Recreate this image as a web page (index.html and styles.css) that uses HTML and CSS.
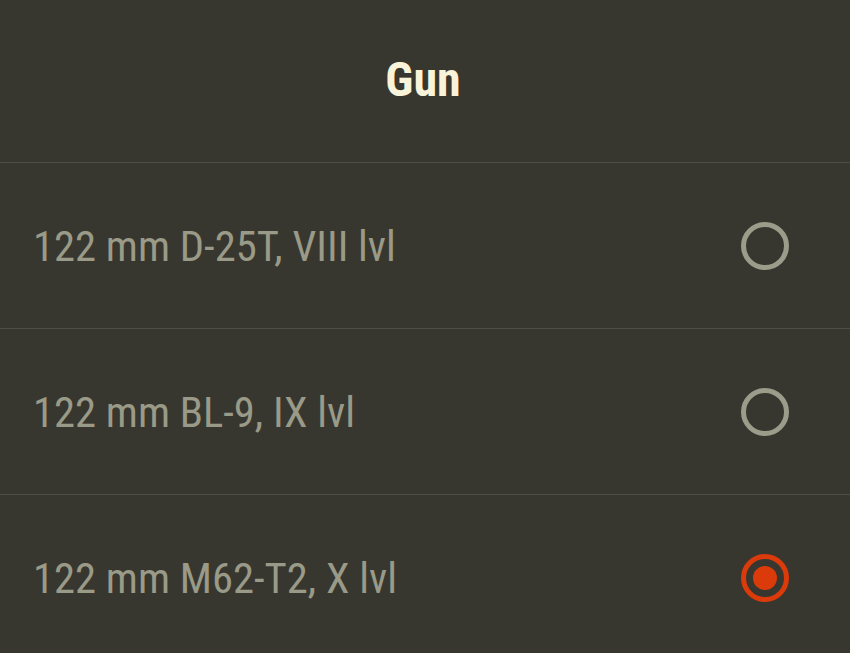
FILE: index.html
```html
<!DOCTYPE html>
<html>
<head>
<meta charset="utf-8">
<link rel="stylesheet" href="styles.css">
</head>
<body>
<div class="sheet">
  <header class="title">Gun</header>
  <ul class="options">
    <li class="option">
      <span class="label">122 mm D-25T, VIII lvl</span>
      <span class="radio"></span>
    </li>
    <li class="option">
      <span class="label">122 mm BL-9, IX lvl</span>
      <span class="radio"></span>
    </li>
    <li class="option">
      <span class="label">122 mm M62-T2, X lvl</span>
      <span class="radio checked"></span>
    </li>
  </ul>
</div>
</body>
</html>
```

FILE: styles.css
```css
html, body {
  margin: 0;
  padding: 0;
  background: #38372f;
}
body {
  font-family: Roboto, "Liberation Sans", sans-serif;
  font-stretch: 75%;
}
.sheet {
  width: 850px;
  height: 653px;
  overflow: hidden;
}
.title {
  display: flex;
  align-items: center;
  justify-content: center;
  color: #f9f3d9;
  font-weight: 700;
  font-size: 48px;
  border-bottom: 1px solid #4f4e46;
  box-sizing: border-box;
  height: 163px;
  padding: 0 4px 4px 0;
}
.options {
  list-style: none;
  margin: 0;
  padding: 0;
}
.option {
  height: 166px;
  box-sizing: border-box;
  border-bottom: 1px solid #4f4e46;
  display: flex;
  align-items: center;
  justify-content: space-between;
  padding: 0 61px 0 33px;
}
.label {
  color: #9a9a88;
  font-size: 42.6px;
}
.radio {
  width: 48px;
  height: 48px;
  box-sizing: border-box;
  border: 5px solid #9c9c8a;
  border-radius: 50%;
  display: flex;
  align-items: center;
  justify-content: center;
}
.radio.checked {
  border-color: #db3a0b;
}
.radio.checked::after {
  content: "";
  width: 24px;
  height: 24px;
  border-radius: 50%;
  background: #db3a0b;
}
```
